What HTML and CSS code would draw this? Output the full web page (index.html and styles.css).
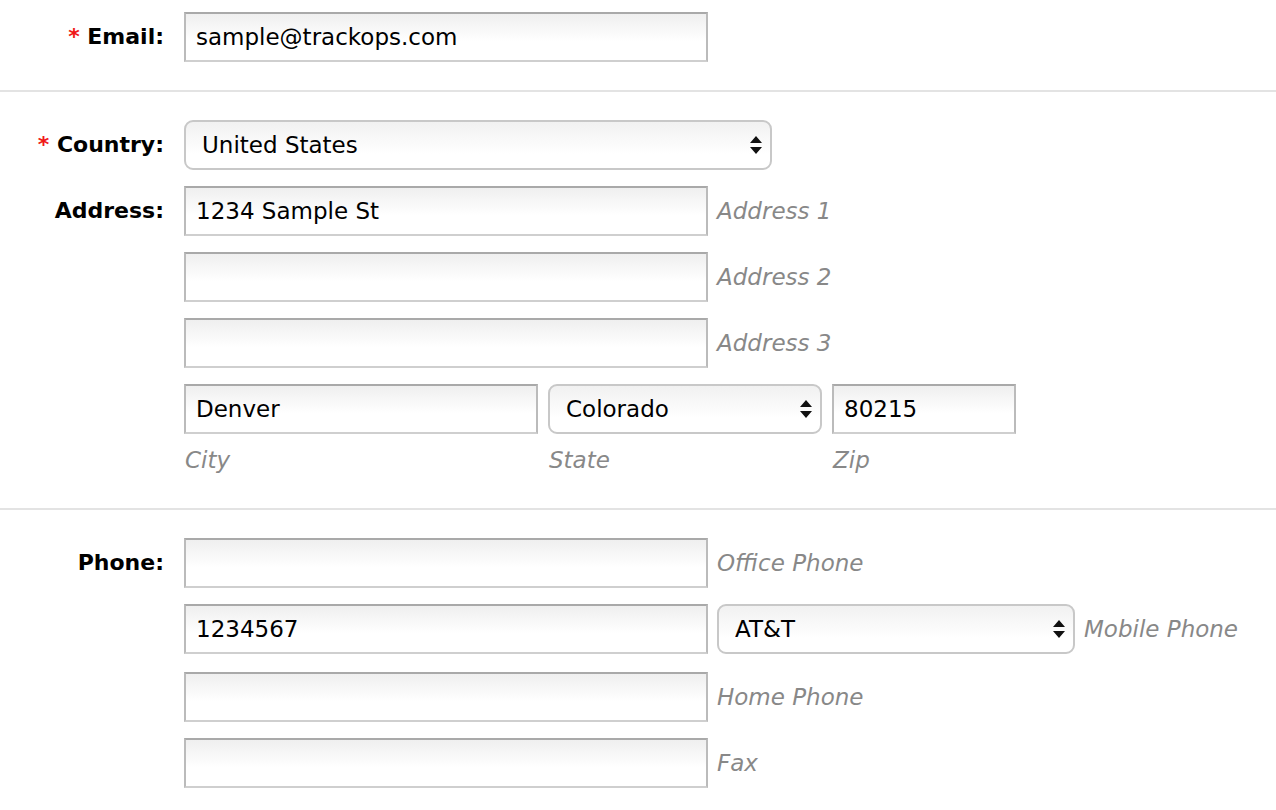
FILE: index.html
```html
<!DOCTYPE html>
<html lang="en">
    <head>
        <meta charset="UTF-8" />
        <meta name="viewport" content="width=device-width, initial-scale=1.0" />
        <title>Contact details</title>
        <link rel="stylesheet" href="styles.css">
    </head>
    <body>
        <form class="form" action="">
            <div class="group first">
                <div class="row">
                    <label class="label" for="email"><span class="req">*</span> Email:</label>
                    <div class="field">
                        <input class="text wide" type="text" id="email" value="sample@trackops.com" />
                    </div>
                </div>
            </div>

            <div class="group address">
                <div class="row">
                    <label class="label" for="country"><span class="req">*</span> Country:</label>
                    <div class="field">
                        <div class="select country">
                            <select id="country"><option>United States</option></select>
                            <svg class="arrows" width="12" height="18" viewBox="0 0 12 18"><path d="M6 0 L12 7 L0 7 Z M0 11 L12 11 L6 18 Z" fill="#111"/></svg>
                        </div>
                    </div>
                </div>
                <div class="row">
                    <label class="label" for="addr1">Address:</label>
                    <div class="field">
                        <input class="text wide" type="text" id="addr1" value="1234 Sample St" />
                        <span class="hint">Address 1</span>
                    </div>
                </div>
                <div class="row">
                    <span class="label"></span>
                    <div class="field">
                        <input class="text wide" type="text" />
                        <span class="hint">Address 2</span>
                    </div>
                </div>
                <div class="row">
                    <span class="label"></span>
                    <div class="field">
                        <input class="text wide" type="text" />
                        <span class="hint">Address 3</span>
                    </div>
                </div>
                <div class="row">
                    <span class="label"></span>
                    <div class="field split">
                        <div class="part">
                            <input class="text city" type="text" value="Denver" />
                            <span class="hint">City</span>
                        </div>
                        <div class="part">
                            <div class="select state">
                                <select><option>Colorado</option></select>
                                <svg class="arrows" width="12" height="18" viewBox="0 0 12 18"><path d="M6 0 L12 7 L0 7 Z M0 11 L12 11 L6 18 Z" fill="#111"/></svg>
                            </div>
                            <span class="hint">State</span>
                        </div>
                        <div class="part">
                            <input class="text zip" type="text" value="80215" />
                            <span class="hint">Zip</span>
                        </div>
                    </div>
                </div>
            </div>

            <div class="group last">
                <div class="row">
                    <label class="label" for="office">Phone:</label>
                    <div class="field">
                        <input class="text wide" type="text" id="office" />
                        <span class="hint">Office Phone</span>
                    </div>
                </div>
                <div class="row">
                    <span class="label"></span>
                    <div class="field">
                        <input class="text wide" type="text" value="1234567" />
                        <div class="select carrier">
                            <select><option>AT&amp;T</option></select>
                            <svg class="arrows" width="12" height="18" viewBox="0 0 12 18"><path d="M6 0 L12 7 L0 7 Z M0 11 L12 11 L6 18 Z" fill="#111"/></svg>
                        </div>
                        <span class="hint">Mobile Phone</span>
                    </div>
                </div>
                <div class="row home">
                    <span class="label"></span>
                    <div class="field">
                        <input class="text wide" type="text" />
                        <span class="hint">Home Phone</span>
                    </div>
                </div>
                <div class="row">
                    <span class="label"></span>
                    <div class="field">
                        <input class="text wide" type="text" />
                        <span class="hint">Fax</span>
                    </div>
                </div>
            </div>
        </form>
    </body>
</html>
```

FILE: styles.css
```css
body {
    margin: 0;
    font-family: "DejaVu Sans", Verdana, sans-serif;
    font-size: 22px;
    color: #000;
    background: #fff;
}

.group {
    display: flex;
    flex-direction: column;
    gap: 16px;
    padding: 28px 0 28px;
    border-bottom: 2px solid #e3e3e3;
}
.group.first {
    padding-top: 12px;
}
.group.address {
    padding-bottom: 35px;
}
.group.last {
    padding-top: 28px;
    border-bottom: none;
}
.row.home {
    margin-top: 2px;
}

.row {
    display: grid;
    grid-template-columns: 164px 1fr;
    column-gap: 20px;
    align-items: start;
}

.label {
    text-align: right;
    font-weight: bold;
    line-height: 50px;
}
.req {
    color: #f01818;
}

.field {
    display: flex;
    align-items: center;
    gap: 9px;
    font-size: 23px;
}
.field.split {
    gap: 10px;
    align-items: flex-start;
}
.part {
    display: flex;
    flex-direction: column;
    gap: 13px;
}
.part .hint {
    padding-left: 1px;
}

.text {
    box-sizing: border-box;
    height: 50px;
    margin: 0;
    padding: 0 10px;
    border: 2px solid #bbb;
    border-top-color: #a9a9a9;
    border-bottom-color: #cfcfcf;
    border-radius: 0;
    background: linear-gradient(#efefef, #fff 60%);
    font: inherit;
    color: #000;
    outline: none;
}
.wide { width: 524px; }
.city { width: 354px; }
.zip { width: 184px; }

.select {
    position: relative;
}
.select select {
    box-sizing: border-box;
    width: 100%;
    height: 50px;
    margin: 0;
    padding: 0 40px 0 16px;
    appearance: none;
    -webkit-appearance: none;
    border: 2px solid #c8c8c8;
    border-radius: 9px;
    background: linear-gradient(#f1f1f1, #fff 70%);
    font: inherit;
    color: #000;
    outline: none;
}
.select .arrows {
    position: absolute;
    right: 10px;
    top: 50%;
    margin-top: -9px;
    pointer-events: none;
}
.country { width: 588px; }
.state { width: 274px; }
.carrier { width: 358px; }

.hint {
    font-style: italic;
    color: #888;
    white-space: nowrap;
}
```
